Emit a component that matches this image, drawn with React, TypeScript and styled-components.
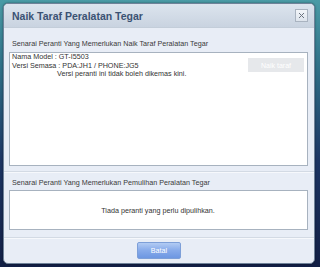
import React from "react";
import styled, { createGlobalStyle } from "styled-components";

const GlobalStyle = createGlobalStyle`
  html, body {
    margin: 0;
    padding: 0;
  }
  body {
    width: 320px;
    height: 267px;
    overflow: hidden;
    font-family: "Liberation Sans", Arial, sans-serif;
    background: linear-gradient(180deg, #4a9ba6 0%, #2f7088 25%, #1c3563 60%, #121f45 100%);
  }
`;

const Screen = styled.div`
  width: 320px;
  height: 267px;
  padding: 3px 5px 5px 3px;
  box-sizing: border-box;
`;

const Dialog = styled.div`
  height: 259px;
  display: flex;
  flex-direction: column;
  border: 1px solid #6f8299;
  border-radius: 5px;
  overflow: hidden;
  background: #e8edf6;
  box-shadow: 0 0 2px rgba(0, 0, 0, 0.5);
`;

const TitleBar = styled.div`
  height: 23px;
  flex-shrink: 0;
  display: flex;
  align-items: center;
  justify-content: space-between;
  padding: 0 6px 0 8px;
  background: linear-gradient(180deg, #dce4ee 0%, #c9d3e0 100%);
  border-bottom: 1px solid #c3cdd9;
`;

const Title = styled.div`
  font-size: 10.5px;
  font-weight: bold;
  color: #3b5273;
`;

const CloseButton = styled.div`
  width: 11px;
  height: 11px;
  display: flex;
  align-items: center;
  justify-content: center;
  border: 1px solid #a9b3c0;
  background: linear-gradient(180deg, #f2f5f9 0%, #dde4ec 100%);
  margin-top: -1px;
`;

const Section = styled.div<{ $top: number; $bottom: number }>`
  padding: ${({ $top }) => $top}px 6px ${({ $bottom }) => $bottom}px 5px;
  border-bottom: 1px solid #d3dae4;
  box-shadow: 0 1px 0 #f6f8fc;
`;

const Label = styled.div<{ $gap: number }>`
  font-size: 7.2px;
  line-height: 10px;
  color: #3a3a3a;
  padding-left: 3px;
  margin-bottom: ${({ $gap }) => $gap}px;
`;

const ListBox = styled.div<{ $height: number; $center?: boolean }>`
  height: ${({ $height }) => $height}px;
  box-sizing: border-box;
  background: #ffffff;
  border: 1px solid #a7b2bf;
  display: flex;
  align-items: ${({ $center }) => ($center ? "center" : "flex-start")};
  justify-content: ${({ $center }) => ($center ? "center" : "space-between")};
  padding: 0 3px 0 2px;
`;

const DeviceInfo = styled.div`
  font-size: 7.2px;
  line-height: 8.5px;
  color: #333333;
`;

const Indented = styled.div`
  padding-left: 45px;
`;

const EmptyText = styled.div`
  font-size: 7.2px;
  color: #333333;
`;

const UpgradeButton = styled.div`
  width: 56px;
  height: 14px;
  margin-top: 5px;
  display: flex;
  align-items: center;
  justify-content: center;
  background: #e6e8eb;
  color: #ffffff;
  font-size: 7px;
`;

const Footer = styled.div`
  flex: 1;
  display: flex;
  justify-content: center;
  padding-top: 4px;
`;

const CancelButton = styled.div`
  width: 44px;
  height: 17px;
  box-sizing: border-box;
  display: flex;
  align-items: center;
  justify-content: center;
  border: 1px solid #7d9fd8;
  border-radius: 2px;
  background: linear-gradient(180deg, #b2cbf3 0%, #86aaea 50%, #6d97e2 100%);
  color: #ffffff;
  font-size: 7.2px;
`;

export default function App() {
  return (
    <>
      <GlobalStyle />
      <Screen>
        <Dialog>
          <TitleBar>
            <Title>Naik Taraf Peralatan Tegar</Title>
            <CloseButton>
              <svg width="7" height="7" viewBox="0 0 7 7">
                <path d="M1 1L6 6M6 1L1 6" stroke="#6b7480" strokeWidth="1" />
              </svg>
            </CloseButton>
          </TitleBar>
          <Section $top={11} $bottom={5}>
            <Label $gap={3}>Senarai Peranti Yang Memerlukan Naik Taraf Peralatan Tegar</Label>
            <ListBox $height={114}>
              <DeviceInfo>
                <div>Nama Model : GT-I5503</div>
                <div>Versi Semasa : PDA:JH1 / PHONE:JG5</div>
                <Indented>Versi peranti ini tidak boleh dikemas kini.</Indented>
              </DeviceInfo>
              <UpgradeButton>Naik taraf</UpgradeButton>
            </ListBox>
          </Section>
          <Section $top={6} $bottom={7}>
            <Label $gap={2}>Senarai Peranti Yang Memerlukan Pemulihan Peralatan Tegar</Label>
            <ListBox $height={40} $center>
              <EmptyText>Tiada peranti yang perlu dipulihkan.</EmptyText>
            </ListBox>
          </Section>
          <Footer>
            <CancelButton>Batal</CancelButton>
          </Footer>
        </Dialog>
      </Screen>
    </>
  );
}
